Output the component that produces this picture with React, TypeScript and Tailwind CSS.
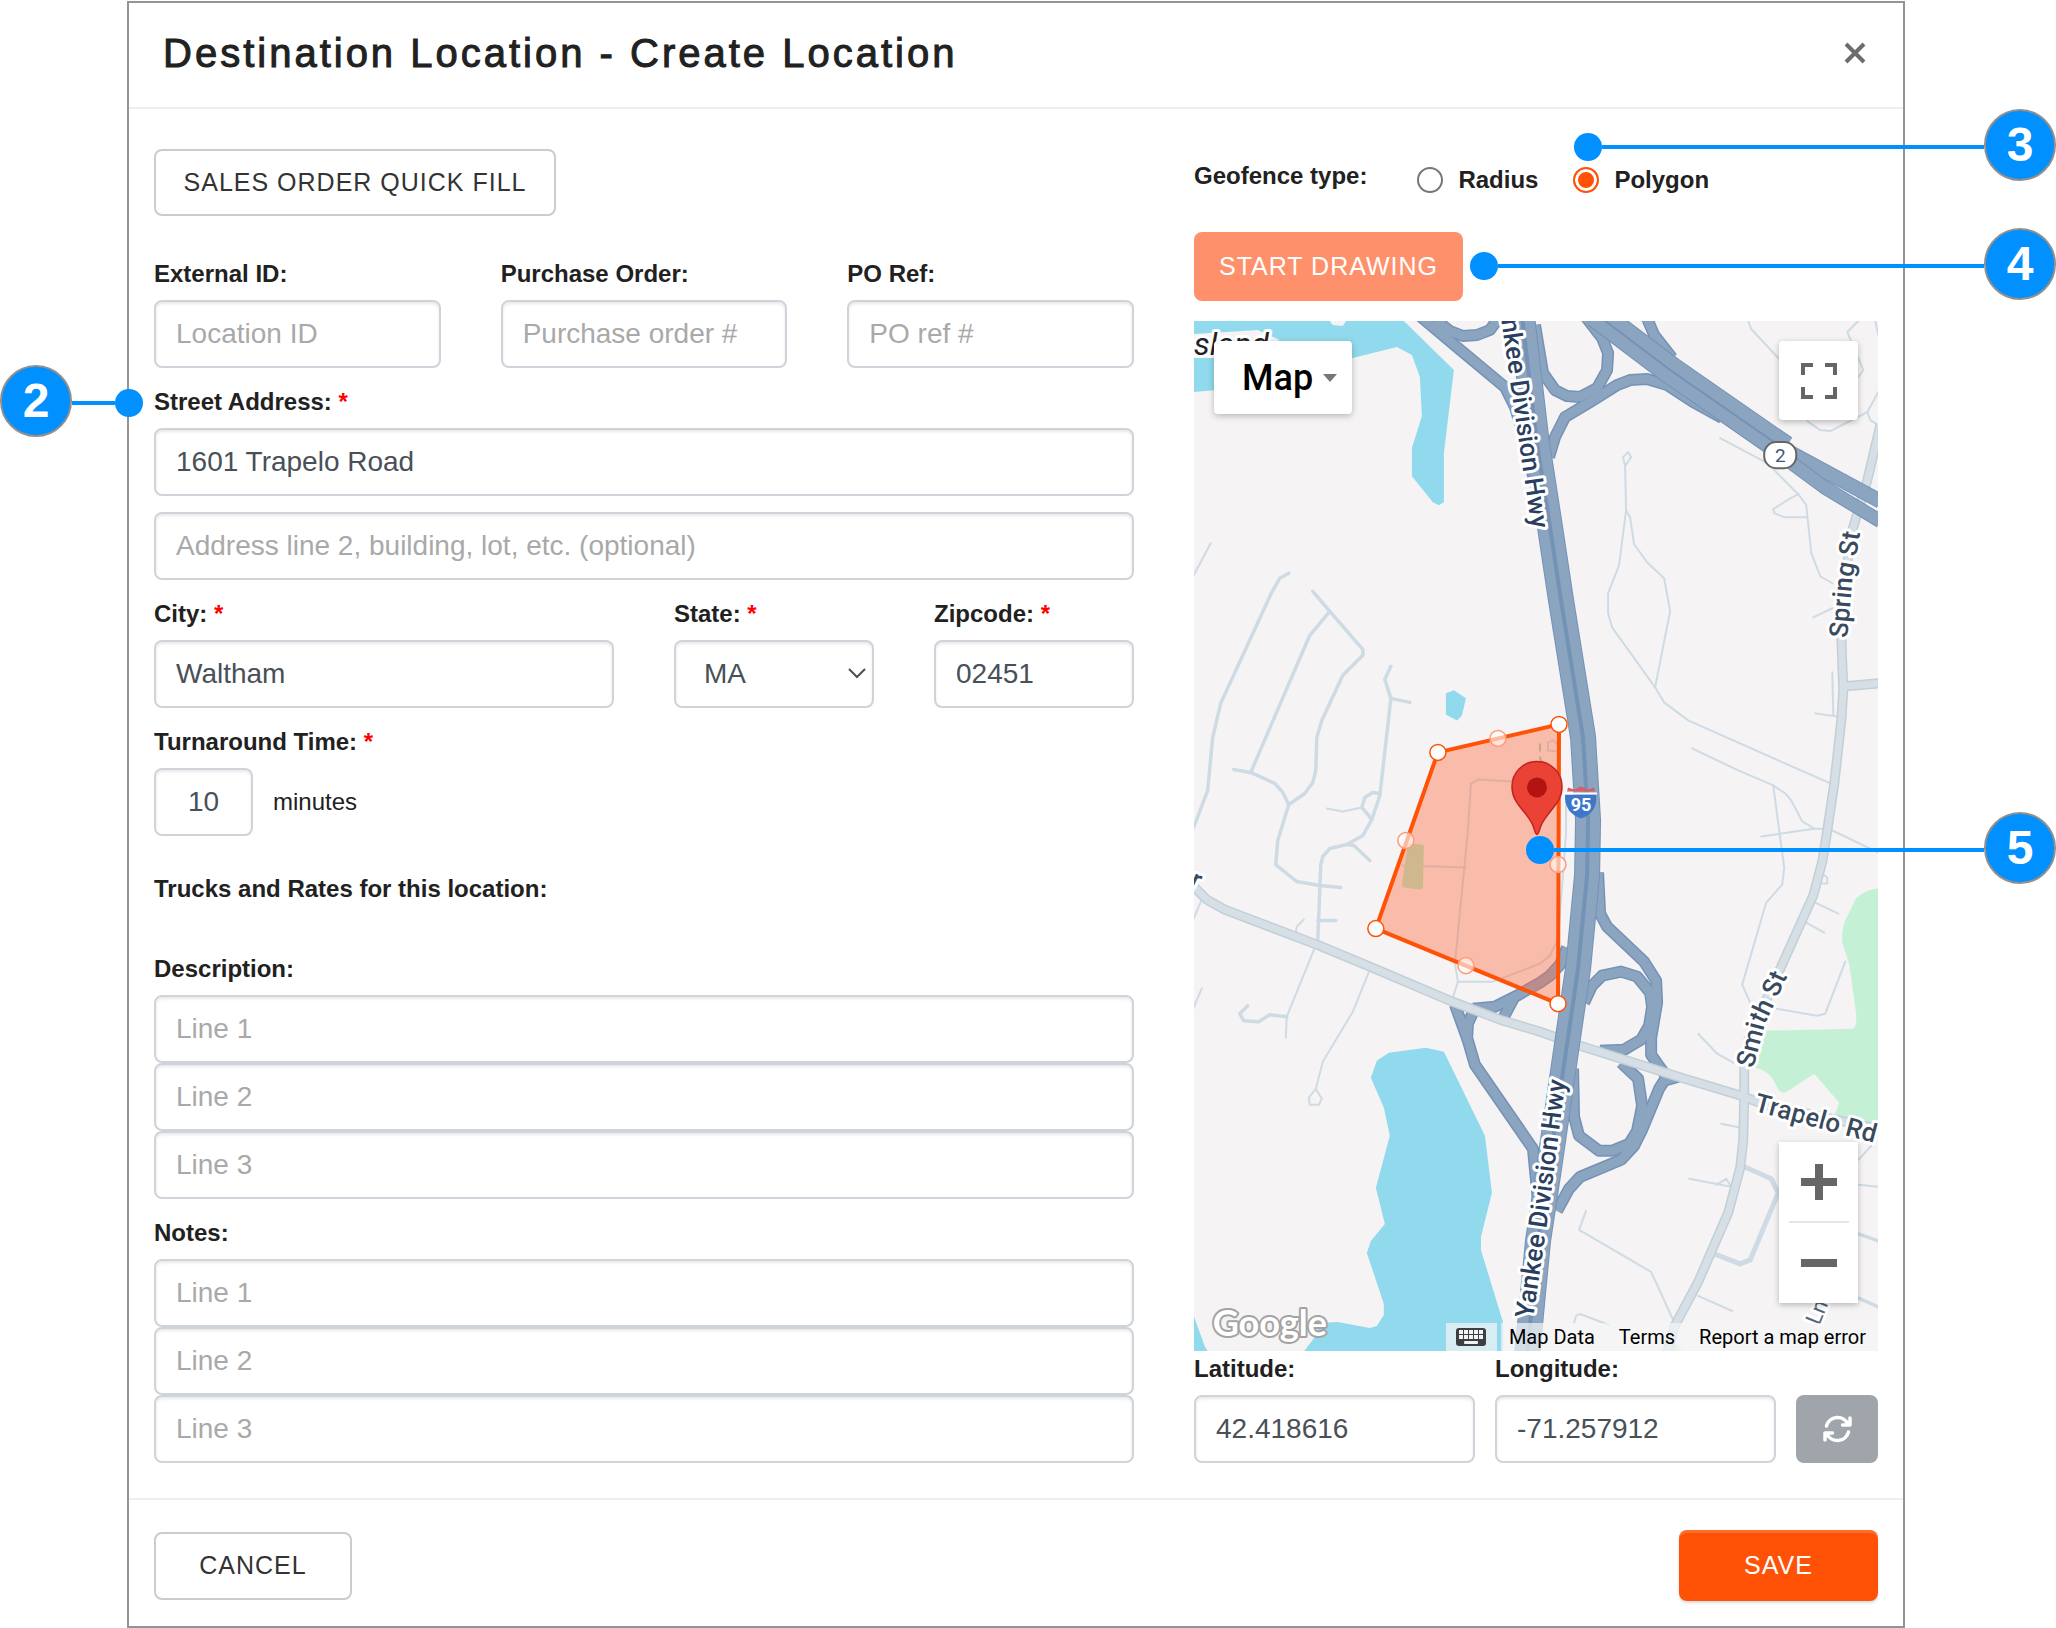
import { useState } from 'react'
import type { ComponentProps, ReactNode } from 'react'

const MINOR_ROADS = [
  'M1211 543 L1194 575',
  'M1626 510 L1630 517 L1634 544 L1647 562 L1664 578 L1670 611 L1655 687',
  'M1628 452 L1623 457 L1625 466 L1631 457Z',
  'M1625 466 L1626 510 L1619 565 L1608 593 L1608 613 L1612 627 L1655 687 L1664 702 L1688 720 L1830 783',
  'M1720 438 L1767 463 L1798 494 L1806 505 L1811 553 L1820 576 L1832 583',
  'M1798 494 L1787 500 L1773 509 L1774 513 L1784 517 L1806 517',
  'M1813 617 L1832 608 M1832 672 L1833 715 M1815 713 L1837 716',
  'M1692 748 L1738 770 L1773 785 L1785 793 L1791 800 L1802 821 L1814 828',
  'M1761 836 L1815 828 L1830 829 L1878 852',
  'M1773 785 L1779 830 L1784 867 L1782 884 L1766 902 L1742 984 L1750 1002',
  'M1813 901 L1838 913 M1804 921 L1824 932',
  'M1823 874 L1827 877 L1827 883 L1822 883',
  'M1845 961 L1825 1013 L1817 1015 L1776 1008',
  'M1698 1033 L1717 1053 L1733 1062 M1721 1123 L1741 1127',
  'M1689 1178 L1731 1186 M1716 1184 L1726 1178 L1731 1186',
  'M1586 1210 L1579 1229 L1651 1271 L1674 1321 M1698 1295 L1732 1310',
  'M1871 1145 L1858 1159 M1858 1184 L1878 1186',
  'M1574 1322 L1576 1315 L1580 1313 L1609 1324',
  'M1748 321 L1751 329 L1778 358 M1875 321 L1878 335',
  'M1858 321 L1847 332 L1863 370 L1858 377',
  'M1878 392 L1867 412 L1870 420 L1878 425 M1867 412 L1830 431 L1820 430 L1807 421',
  'M1202 899 L1194 918 M1202 988 L1194 1007',
  'M1304 919 L1297 926 L1296 932',
  'M1327 808 L1343 811 L1362 807',
  'M1315 947 L1287 1016 L1286 1037',
  'M1370 969 L1353 1011 L1323 1061 L1316 1088 L1309 1097 L1310 1104 L1319 1104 L1322 1098 L1316 1088',
  'M1512 781 L1479 779 L1471 783 L1468 830 L1455 963 L1458 981 L1453 997',
  'M1458 981 L1493 981 L1540 963 L1550 955 L1558 938 L1566 833 L1566 800',
  'M1403 865 L1466 867',
  'M1548 748 L1548 742 L1553 740 L1558 744 L1558 751 L1548 750Z',
]

const LOCAL_ROADS = [
  'M1289 573 L1280 578 L1272 592 L1221 703 L1213 737 L1208 790 L1194 827',
  'M1313 591 L1330 611 L1363 649 L1363 655 L1343 675 L1322 720 L1317 737 L1316 770 L1313 782 L1305 793 L1289 804 L1278 840 L1276 864 L1297 881 L1320 885 L1341 887',
  'M1330 611 L1310 635 L1251 772',
  'M1234 769 L1251 772 L1275 783 L1283 792 L1289 804',
  'M1391 666 L1385 679 L1391 698 L1380 795 L1372 819 L1363 835 L1347 844 L1330 848 L1323 856 L1321 864 L1318 940',
  'M1391 698 L1410 702',
  'M1380 793 L1373 792 L1365 797 L1362 807 L1372 819',
  'M1347 844 L1354 845 L1370 860 M1318 920 L1336 920',
  'M1287 1016 L1270 1014 L1259 1021 L1244 1020 L1240 1013 L1248 1005',
  'M1858 1233 L1878 1240 M1858 1297 L1878 1306',
]

const COLLECTOR_ROADS = [
  'M1195 887 L1207 899 L1225 909 L1317 944 L1370 966 L1450 1000 L1500 1019 L1540 1031 L1580 1045 L1678 1076 L1741 1095 L1765 1104 L1878 1128',
  'M1880 425 L1867 480 L1852 530 L1841 600 L1841 637 L1843 690 L1841 720 L1834 783 L1827 830 L1822 861 L1813 895 L1780 968 L1748 1040 L1744 1064 L1744 1097 L1743 1140 L1740 1167 L1728 1212 L1698 1281 L1674 1326 L1667 1352',
  'M1845 686 L1878 683',
]

const RAMPS = [
  'M1535 325 L1543 373 L1555 390 L1567 396 L1580 397 L1597 388 L1607 370 L1608 353 L1602 338 L1585 316',
  'M1549 457 L1555 437 L1565 417 L1590 402 L1617 385 L1630 380 L1647 379 L1667 385 L1693 402 L1722 418',
  'M1646 316 L1654 335 L1672 358',
  'M1420 316 L1457 347 L1505 387 L1515 407 L1524 437 L1534 480',
  'M1436 320 L1450 331 L1463 336 L1477 335 L1490 330 L1500 316',
  'M1455 1004 L1468 1040 L1475 1064 L1533 1148 L1538 1200',
  'M1476 1005 L1468 1023 L1467 1040',
  'M1473 1008 L1495 1006 L1517 995 L1540 982 L1550 975 L1560 964 L1567 947',
  'M1514 997 L1503 1018',
  'M1598 872 L1600 913 L1607 926 L1644 961 L1656 980 L1657 1002 L1651 1037 L1651 1054 L1665 1074',
  'M1584 1002 L1592 985 L1602 975 L1621 971 L1637 976 L1650 992 L1652 1006 L1649 1025 L1641 1039 L1624 1049 L1600 1050',
  'M1621 1062 L1638 1078 L1642 1105 L1637 1130 L1629 1143 L1612 1150 L1599 1150 L1579 1135 L1574 1116 L1573 1068',
  'M1678 1076 L1664 1080 L1659 1088 L1642 1129 L1634 1145 L1621 1159 L1580 1176 L1569 1188 L1557 1210',
]

const INTERSTATE =
  'M1522 316 L1536 437 L1550 527 L1561 600 L1583 737 L1588 820 L1587 875 L1578 968 L1563 1071 L1548 1174 L1538 1240 L1527 1355'

const ROUTE_2 = 'M1596 314 L1670 370 L1784 449'

const GEOFENCE = 'M1559 724 L1438 752 L1376 928 L1558 1003Z'
const VERTICES = [
  [1559, 724],
  [1438, 752],
  [1376, 928],
  [1558, 1003],
]
const MIDPOINTS = [
  [1498, 738],
  [1406, 840],
  [1466, 965],
  [1558, 864],
]

function Road({ d, width }: { d: string; width: number }) {
  return (
    <>
      <path d={d} stroke="#7492b6" strokeWidth={width} />
      <path d={d} stroke="#8ba5c1" strokeWidth={width - 2} />
    </>
  )
}

function MapDrawing() {
  return (
    <svg
      viewBox="1194 321 684 1029"
      preserveAspectRatio="xMidYMid slice"
      className="block h-full w-full font-[Roboto,sans-serif]"
      role="img"
      aria-label="Map of Waltham"
    >
      <rect x="1194" y="321" width="684" height="1029" fill="#f5f3f4" />

      {/* water */}
      <g fill="#91daed">
        <path d="M1194 320 H1329 L1333 325 L1343 326 L1347 320 H1403 L1454 370 L1444 453 L1444 502 L1439 505 L1433 502 L1412 476 L1412 448 L1422 416 L1420 377 L1412 355 L1397 347 L1353 358 L1240 388 L1194 392Z" />
        <path d="M1446 693 L1454 690 L1466 698 L1462 715 L1457 720 L1446 714Z" />
        <path d="M1426 1047 L1444 1051 L1485 1135 L1492 1192 L1481 1236 L1481 1249 L1503 1321 L1503 1352 H1303 L1315 1336 L1320 1322 L1338 1321 L1370 1327 L1377 1325 L1384 1314 L1384 1303 L1367 1252 L1371 1240 L1385 1223 L1376 1187 L1390 1135 L1384 1107 L1371 1077 L1377 1060 L1389 1052Z" />
        <path d="M1194 1315 L1205 1345 L1209 1352 H1194Z" />
      </g>
      <path d="M1194 334 L1258 330 L1280 340 L1220 358 L1194 358Z" fill="#f5f3f4" />

      {/* parks */}
      <path
        d="M1879 888 Q1865 888 1855 899 L1845 920 Q1841 930 1842 942 L1849 964 L1856 1014 Q1856 1027 1853 1028 L1765 1030 L1752 1066 Q1770 1070 1775 1083 Q1780 1096 1788 1090 L1814 1073 L1839 1102 L1834 1116 L1879 1126Z"
        fill="#c4f0d6"
      />
      <path d="M1674 1340 L1684 1352 H1670Z" fill="#c4f0d6" />

      <g fill="none" stroke="#cfdbe4" strokeLinejoin="round" strokeLinecap="round">
        {MINOR_ROADS.map((d) => (
          <path key={d} d={d} strokeWidth="2" />
        ))}
        {LOCAL_ROADS.map((d) => (
          <path key={d} d={d} strokeWidth="3.5" />
        ))}
        <path d="M1742 1165 L1771 1178 L1778 1192 L1750 1259 L1740 1263 L1714 1253" strokeWidth="5" />
      </g>

      <g fill="none" strokeLinejoin="round">
        {RAMPS.map((d) => (
          <path key={d} d={d} stroke="#7492b6" strokeWidth="12" />
        ))}
        {RAMPS.map((d) => (
          <path key={d} d={d} stroke="#8ba5c1" strokeWidth="9" />
        ))}
        {COLLECTOR_ROADS.map((d) => (
          <path key={d} d={d} stroke="#c3cfd7" strokeWidth="10" />
        ))}
        {COLLECTOR_ROADS.map((d) => (
          <path key={d} d={d} stroke="#d6dfe6" strokeWidth="7" />
        ))}
        <Road d="M1778 446 L1880 501" width={15} />
        <Road d="M1774 450 L1824 487 L1880 521" width={14} />
        <Road d={ROUTE_2} width={28} />
        <path d={ROUTE_2} stroke="#7492b6" strokeWidth="2" />
        <Road d={INTERSTATE} width={26} />
        <path d={INTERSTATE} stroke="#7492b6" strokeWidth="4" />
      </g>

      {/* street names */}
      <defs>
        <path id="hwy-north" d="M1497 291 L1534 545" />
        <path id="hwy-south" d="M1533 1318 L1548 1216 L1568 1061" />
        <path id="spring" d="M1847 638 L1852 581 L1865 501" />
        <path id="smith" d="M1753 1068 L1765 1023 L1794 961" />
        <path id="trapelo" d="M1753 1110 L1900 1149" />
      </defs>
      <g
        fontSize="26"
        fontWeight="500"
        fill="#2a3f5f"
        stroke="#fff"
        strokeWidth="6"
        strokeLinejoin="round"
        paintOrder="stroke"
      >
        <text>
          <textPath href="#hwy-north">Yankee Division Hwy</textPath>
        </text>
        <text>
          <textPath href="#hwy-south">Yankee Division Hwy</textPath>
        </text>
        <text fill="#3a4a5e">
          <textPath href="#spring">Spring St</textPath>
        </text>
        <text fill="#3a4a5e">
          <textPath href="#smith">Smith St</textPath>
        </text>
        <text fill="#3a4a5e">
          <textPath href="#trapelo">Trapelo Rd</textPath>
        </text>
        <text x="1194" y="355" fontSize="32" fontWeight="400" fontStyle="italic" fill="#1f2328">
          sland
        </text>
        <text transform="translate(1819 1325) rotate(-68)" fontSize="22" fontWeight="400" fill="#55647a">
          Ln
        </text>
        <text transform="translate(1189 885) rotate(25)" fill="#3a4a5e">
          r
        </text>
      </g>

      {/* route 2 shield */}
      <rect x="1764" y="442" width="32" height="26" rx="12" fill="#fff" stroke="#666" strokeWidth="2" />
      <text x="1780" y="462" fontSize="19" fill="#3f5575" textAnchor="middle">
        2
      </text>

      {/* geofence */}
      <path d={GEOFENCE} fill="#ff6a3c" fillOpacity="0.4" />
      <path
        d="M1408 843 L1422 844 Q1424 844 1424 846 L1423 887 Q1422 889 1420 889 L1404 887 Q1402 886 1402 884Z"
        fill="#cfb78e"
      />
      <path d="M1540 743 V751 M1540 756 Q1540 760 1543 762" stroke="#b0a47c" strokeWidth="1.5" fill="none" />
      <path d={GEOFENCE} fill="none" stroke="#ff5207" strokeWidth="4" />
      {MIDPOINTS.map(([x, y]) => (
        <circle key={`${x}-${y}`} cx={x} cy={y} r="8" fill="#fff" fillOpacity="0.6" stroke="#ff9a7a" strokeWidth="1.5" />
      ))}
      {VERTICES.map(([x, y]) => (
        <circle key={`${x}-${y}`} cx={x} cy={y} r="8" fill="#fff" stroke="#ff5207" strokeWidth="1.5" />
      ))}

      {/* interstate shield */}
      <path d="M1567 791 L1568 787 L1574 789 L1581 786 L1588 789 L1594 787 L1595 791Z" fill="#d75f62" />
      <path d="M1565 794 H1596 Q1598 812 1581 818 Q1564 812 1565 794Z" fill="#3c77c9" />
      <path d="M1564 793 H1597" stroke="#fff" strokeWidth="2" />
      <text x="1581" y="811" fontSize="18" fontWeight="700" fill="#fff" textAnchor="middle">
        95
      </text>

      {/* pin */}
      <path
        d="M1537 834 C1535 834 1535 829 1532 823 C1525 809 1512 803 1512 786 A25 25 0 0 1 1562 786 C1562 803 1549 809 1542 823 C1539 829 1539 834 1537 834Z"
        fill="#ea4335"
        stroke="#c5221f"
        strokeWidth="1.5"
      />
      <circle cx="1537" cy="787" r="10" fill="#b31412" />

      <text
        x="1213"
        y="1335"
        fontSize="36"
        className="font-[Lato,sans-serif]"
        fontWeight="700"
        fill="#fff"
        stroke="#a3a3a3"
        strokeWidth="4"
        strokeLinejoin="round"
        paintOrder="stroke"
      >
        Google
      </text>
    </svg>
  )
}

function KeyboardIcon() {
  return (
    <svg viewBox="0 0 30 18" className="h-[18px] w-[30px]" aria-hidden="true">
      <rect width="30" height="18" rx="3" fill="#3c4043" />
      <g fill="#f1f3f4">
        {[3, 8, 13, 18, 23].map((x) => (
          <rect key={x} x={x} y="2" width="4" height="4" />
        ))}
        {[3, 8, 13, 18, 23].map((x) => (
          <rect key={x} x={x} y="7" width="4" height="4" />
        ))}
        <rect x="8" y="13" width="14" height="3" rx="1" />
      </g>
    </svg>
  )
}

function RefreshIcon() {
  return (
    <svg
      viewBox="0 0 29 28"
      className="h-7 w-[29px]"
      fill="none"
      stroke="currentColor"
      strokeWidth="3.5"
      strokeLinecap="round"
      strokeLinejoin="round"
      aria-hidden="true"
    >
      <path d="M3.5 11 A11.5 11.5 0 0 1 25 9 M27 3 V10 H19.5" />
      <path d="M25.5 17 A11.5 11.5 0 0 1 4 19 M2 25 V18 H9.5" />
    </svg>
  )
}

function GeofenceMap() {
  return (
    <div className="relative min-h-0 flex-1 basis-0 overflow-hidden font-[Roboto,sans-serif]">
      <div className="absolute inset-0">
        <MapDrawing />
      </div>
      <button
        type="button"
        className="absolute left-5 top-5 flex h-[73px] w-[138px] items-center gap-2.5 rounded bg-white pl-7 text-[36px] font-medium text-black shadow-[0_2px_6px_rgba(0,0,0,0.25)]"
      >
        Map
        <svg viewBox="0 0 14 8" className="h-2 w-3.5" aria-hidden="true">
          <path d="M0 0 H14 L7 8Z" fill="#777" />
        </svg>
      </button>
      <button
        type="button"
        aria-label="Toggle fullscreen view"
        className="absolute right-5 top-5 flex size-[79px] items-center justify-center rounded bg-white shadow-[0_2px_6px_rgba(0,0,0,0.25)]"
      >
        <svg viewBox="0 0 36 36" className="size-9" fill="none" stroke="#666" strokeWidth="4" aria-hidden="true">
          <path d="M2 12 V2 H12 M24 2 H34 V12 M34 24 V34 H24 M12 34 H2 V24" />
        </svg>
      </button>
      <div className="absolute bottom-12 right-5 flex w-[79px] flex-col items-center bg-white shadow-[0_2px_6px_rgba(0,0,0,0.25)]">
        <button type="button" aria-label="Zoom in" className="flex size-[79px] items-center justify-center">
          <svg viewBox="0 0 36 36" className="size-9" stroke="#666" strokeWidth="8" aria-hidden="true">
            <path d="M0 18 H36 M18 0 V36" />
          </svg>
        </button>
        <div className="h-0.5 w-[60px] bg-[#e6e6e6]" />
        <button type="button" aria-label="Zoom out" className="flex size-20 items-center justify-center">
          <svg viewBox="0 0 36 36" className="size-9" stroke="#666" strokeWidth="8" aria-hidden="true">
            <path d="M0 18 H36" />
          </svg>
        </button>
      </div>
      <div className="absolute bottom-0 right-0 flex h-7 items-stretch gap-1 text-[20px] leading-7 text-black">
        <button type="button" aria-label="Keyboard shortcuts" className="flex w-[51px] items-center justify-center bg-[#f5f5f5]/70">
          <KeyboardIcon />
        </button>
        <div className="flex gap-6 bg-[#f5f5f5]/70 pl-2 pr-3">
          <button type="button">Map Data</button>
          <a href="#terms">Terms</a>
          <a href="#report">Report a map error</a>
        </div>
      </div>
    </div>
  )
}

const inputClass =
  'h-[68px] w-full min-w-0 rounded-lg border-2 border-[#ced4da] bg-white px-5 text-[28px] text-[#495057] shadow-[inset_0_2px_3px_rgba(0,0,0,0.09)] placeholder:text-[#a9a9a9]'

function Field({ id, label, required, children }: { id: string; label: string; required?: boolean; children: ReactNode }) {
  return (
    <div className="flex min-w-0 flex-col gap-2">
      <label htmlFor={id} className="text-[24px] leading-9 font-bold">
        {label}
        {required && <span className="text-[#f00]"> *</span>}
      </label>
      {children}
    </div>
  )
}

function TextInput({ className = '', ...props }: ComponentProps<'input'>) {
  return <input type="text" className={`${inputClass} ${className}`} {...props} />
}

function LineInputs({ id, label }: { id: string; label: string }) {
  return (
    <Field id={id} label={label}>
      <div className="flex flex-col">
        <TextInput id={id} placeholder="Line 1" />
        <TextInput aria-label={`${label} line 2`} placeholder="Line 2" />
        <TextInput aria-label={`${label} line 3`} placeholder="Line 3" />
      </div>
    </Field>
  )
}

function Badge({ n }: { n: number }) {
  return (
    <span className="flex size-[72px] shrink-0 items-center justify-center rounded-full border-2 border-[#8f8f8f] bg-[#0090ff] text-[48px] leading-none font-bold text-white">
      {n}
    </span>
  )
}

function Callout({ n, className }: { n: number; className: string }) {
  return (
    <div className={`absolute right-0 flex items-center ${className}`}>
      <div className="flex flex-1 items-center pt-1">
        <span className="size-7 rounded-full bg-[#0090ff]" />
        <span className="h-1 flex-1 bg-[#0090ff]" />
      </div>
      <Badge n={n} />
    </div>
  )
}

export default function App() {
  const [geofence, setGeofence] = useState('polygon')

  return (
    <div className="relative bg-white py-px pl-[127px] pr-[151px] font-['Liberation_Sans',Arial,sans-serif] text-[#212121]">
      <form className="border-2 border-[#949494]" onSubmit={(e) => e.preventDefault()}>
        <header className="flex h-[106px] items-center justify-between border-b-2 border-[#eee] px-[34px] pb-1">
          <h1 className="text-[40px] leading-none tracking-[3px] [-webkit-text-stroke:1px_#212121]">
            Destination Location - Create Location
          </h1>
          <button type="button" aria-label="Close" className="flex size-7 items-center justify-center">
            <svg viewBox="0 0 22 22" className="size-[22px]" stroke="#6c6c6c" strokeWidth="4" aria-hidden="true">
              <path d="M2 2 L20 20 M20 2 L2 20" />
            </svg>
          </button>
        </header>

        <div className="grid grid-cols-[980fr_684fr] gap-[60px] px-[25px] pt-10 pb-[35px]">
          <div className="flex min-w-0 flex-col gap-4">
            <button
              type="button"
              className="mb-6 h-[67px] w-[402px] rounded-lg border-2 border-[#ccc] text-[25px] tracking-[1px] text-[#333]"
            >
              SALES ORDER QUICK FILL
            </button>
            <div className="grid grid-cols-3 gap-[60px]">
              <Field id="external-id" label="External ID:">
                <TextInput id="external-id" placeholder="Location ID" />
              </Field>
              <Field id="purchase-order" label="Purchase Order:">
                <TextInput id="purchase-order" placeholder="Purchase order #" />
              </Field>
              <Field id="po-ref" label="PO Ref:">
                <TextInput id="po-ref" placeholder="PO ref #" />
              </Field>
            </div>
            <Field id="street" label="Street Address:" required>
              <TextInput id="street" defaultValue="1601 Trapelo Road" />
            </Field>
            <TextInput aria-label="Address line 2" placeholder="Address line 2, building, lot, etc. (optional)" />
            <div className="grid grid-cols-[23fr_10fr_10fr] gap-[60px]">
              <Field id="city" label="City:" required>
                <TextInput id="city" defaultValue="Waltham" />
              </Field>
              <Field id="state" label="State:" required>
                <div className="relative">
                  <select id="state" defaultValue="MA" className={`${inputClass} appearance-none pl-7`}>
                    <option>MA</option>
                    <option>NH</option>
                    <option>RI</option>
                  </select>
                  <svg
                    viewBox="0 0 18 12"
                    className="pointer-events-none absolute right-2 top-7 h-3 w-[18px]"
                    fill="none"
                    stroke="#495057"
                    strokeWidth="2"
                    aria-hidden="true"
                  >
                    <path d="M1 1 L9 9 L17 1" />
                  </svg>
                </div>
              </Field>
              <Field id="zip" label="Zipcode:" required>
                <TextInput id="zip" defaultValue="02451" />
              </Field>
            </div>
            <Field id="turnaround" label="Turnaround Time:" required>
              <div className="flex items-center gap-5">
                <div className="w-[99px]">
                  <TextInput id="turnaround" defaultValue="10" className="text-center" />
                </div>
                <span className="text-[24px]">minutes</span>
              </div>
            </Field>
            <h2 className="mt-[19px] mb-7 text-[24px] leading-9 font-bold">Trucks and Rates for this location:</h2>
            <LineInputs id="description" label="Description:" />
            <LineInputs id="notes" label="Notes:" />
          </div>

          <div className="flex min-w-0 flex-col">
            <div
              role="radiogroup"
              aria-labelledby="geofence-type"
              className="mb-[34px] flex items-start gap-[50px] pt-[9px] text-[24px] leading-9 font-bold"
            >
              <span id="geofence-type">Geofence type:</span>
              <div className="flex gap-[35px] pt-1">
                {['Radius', 'Polygon'].map((name) => (
                  <label key={name} className="flex items-center gap-[15px]">
                    <input
                      type="radio"
                      name="geofence"
                      checked={geofence === name.toLowerCase()}
                      onChange={() => setGeofence(name.toLowerCase())}
                      className="size-[26px] appearance-none rounded-full border-2 border-[#767676] bg-white checked:border-[#ff5207] checked:bg-[#ff5207] checked:shadow-[inset_0_0_0_3px_white]"
                    />
                    {name}
                  </label>
                ))}
              </div>
            </div>
            <button
              type="button"
              className="mb-5 h-[69px] w-[269px] rounded-lg bg-[#ff906c] text-[25px] tracking-[1px] text-white"
            >
              START DRAWING
            </button>
            <GeofenceMap />
            <div className="grid grid-cols-[1fr_1fr_82px] items-end gap-5">
              <Field id="latitude" label="Latitude:">
                <TextInput id="latitude" defaultValue="42.418616" />
              </Field>
              <Field id="longitude" label="Longitude:">
                <TextInput id="longitude" defaultValue="-71.257912" />
              </Field>
              <button
                type="button"
                aria-label="Refresh coordinates"
                className="flex h-[68px] items-center justify-center rounded-lg bg-[#a0a4ab] text-white"
              >
                <RefreshIcon />
              </button>
            </div>
          </div>
        </div>

        <footer className="flex items-center justify-between border-t-2 border-[#eee] px-[25px] pt-[30px] pb-[25px]">
          <button
            type="button"
            className="h-[68px] w-[198px] rounded-lg border-2 border-[#ccc] text-[25px] tracking-[1px] text-[#333]"
          >
            CANCEL
          </button>
          <button
            type="submit"
            className="h-[71px] w-[199px] rounded-lg bg-[#ff5207] text-[25px] tracking-[1px] text-white shadow-[inset_0_3px_0_rgba(255,255,255,0.15),0_2px_3px_rgba(0,0,0,0.15)]"
          >
            SAVE
          </button>
        </footer>
      </form>

      <div className="absolute left-0 top-[365px] flex items-center">
        <Badge n={2} />
        <div className="flex items-center pt-1">
          <span className="h-1 w-[43px] bg-[#0090ff]" />
          <span className="size-7 rounded-full bg-[#0090ff]" />
        </div>
      </div>
      <Callout n={3} className="top-[109px] w-[482px]" />
      <Callout n={4} className="top-[228px] w-[586px]" />
      <Callout n={5} className="top-[812px] w-[530px]" />
    </div>
  )
}
